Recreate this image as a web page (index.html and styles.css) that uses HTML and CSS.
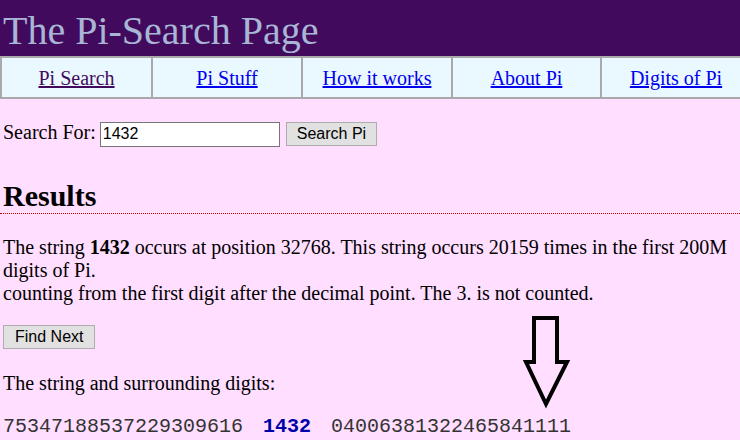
FILE: index.html
```html
<!DOCTYPE html>
<html>
<head>
<meta charset="utf-8">
<title>The Pi-Search Page</title>
<link rel="stylesheet" href="styles.css">
</head>
<body>
<header class="masthead">
  <h1 class="title">The Pi-Search Page</h1>
</header>
<nav class="nav">
  <div class="nav-cell"><a class="visited" href="#">Pi Search</a></div>
  <div class="nav-cell"><a href="#">Pi Stuff</a></div>
  <div class="nav-cell"><a href="#">How it works</a></div>
  <div class="nav-cell"><a href="#">About Pi</a></div>
  <div class="nav-cell"><a href="#">Digits of Pi</a></div>
</nav>
<main class="content">
  <form class="search-row">
    <label class="search-label" for="q">Search For:</label>
    <input class="search-input" id="q" type="text" value="1432">
    <button class="btn btn-search" type="button">Search Pi</button>
  </form>
  <h2 class="results">Results</h2>
  <p class="para first">The string <b>1432</b> occurs at position 32768. This string occurs 20159 times in the first 200M digits of Pi.<br>counting from the first digit after the decimal point. The 3. is not counted.</p>
  <button class="btn btn-next" type="button">Find Next</button>
  <p class="para">The string and surrounding digits:</p>
  <p class="digits">75347188537229309616<span class="hit">1432</span>04006381322465841111</p>
</main>
<svg class="arrow" width="54" height="100" viewBox="0 0 54 100" aria-hidden="true">
  <path d="M14 6 L37 6 L37 50 L47 50 L26 92 L6 50 L14 50 Z" fill="none" stroke="#000" stroke-width="4" stroke-linejoin="miter"/>
</svg>
</body>
</html>
```
FILE: styles.css
```css
html, body {
  margin: 0;
  padding: 0;
}
body {
  background: #ffdeff;
  font-family: "Liberation Serif", "Times New Roman", serif;
  font-size: 20px;
  color: #000;
  position: relative;
  overflow: hidden;
  min-height: 440px;
}
.masthead {
  background: #420a5c;
  padding: 8px 3px 2px;
}
.title {
  margin: 0;
  font-weight: normal;
  font-size: 40px;
  line-height: 46px;
  color: #a8b6d6;
}
.nav {
  display: grid;
  grid-template-columns: 151px 150px 150px 149px 150px;
  background: #eaf8ff;
  border-top: 2px solid #a9a9a9;
  border-bottom: 2px solid #a9a9a9;
  overflow: hidden;
}
.nav-cell {
  border-left: 2px solid #a9a9a9;
  text-align: center;
  padding: 9px 0 7px;
  line-height: 23px;
}
.nav-cell a {
  color: #0000ee;
}
.nav-cell a.visited {
  color: #420a5c;
}
.content {
  padding: 0 3px;
}
.search-row {
  display: flex;
  align-items: baseline;
  margin: 22px 0 0;
}
.search-label {
  line-height: 23px;
}
.search-input {
  box-sizing: border-box;
  width: 180px;
  height: 25px;
  margin: 0 0 0 4px;
  padding: 1px 2px;
  border: 1px solid #767676;
  background: #fff;
  font-family: "Liberation Sans", Arial, sans-serif;
  font-size: 16px;
  color: #000;
}
.btn {
  box-sizing: border-box;
  height: 24px;
  padding: 0 11px;
  margin: 0;
  background: #e1e1e1;
  border: 1px solid #adadad;
  font-family: "Liberation Sans", Arial, sans-serif;
  font-size: 16px;
  color: #000;
}
.btn-search {
  margin-left: 6px;
  padding: 0 10px;
}
.results {
  margin: 32px -3px 0;
  padding-left: 3px;
  font-size: 30px;
  line-height: 34px;
  font-weight: bold;
  border-bottom: 1px dotted #cc0000;
}
.para {
  margin: 23px 0 20px;
  line-height: 23px;
}
.para.first {
  margin-top: 22px;
}
.btn-next {
  display: block;
  margin-top: 1px;
}
.digits {
  margin: 19px 0 0;
  font-family: "Liberation Mono", "Courier New", monospace;
  font-size: 20px;
  line-height: 23px;
  color: #333;
}
.hit {
  font-weight: bold;
  color: #0000aa;
  margin: 0 20px;
}
.arrow {
  position: absolute;
  left: 520px;
  top: 312px;
}
```
